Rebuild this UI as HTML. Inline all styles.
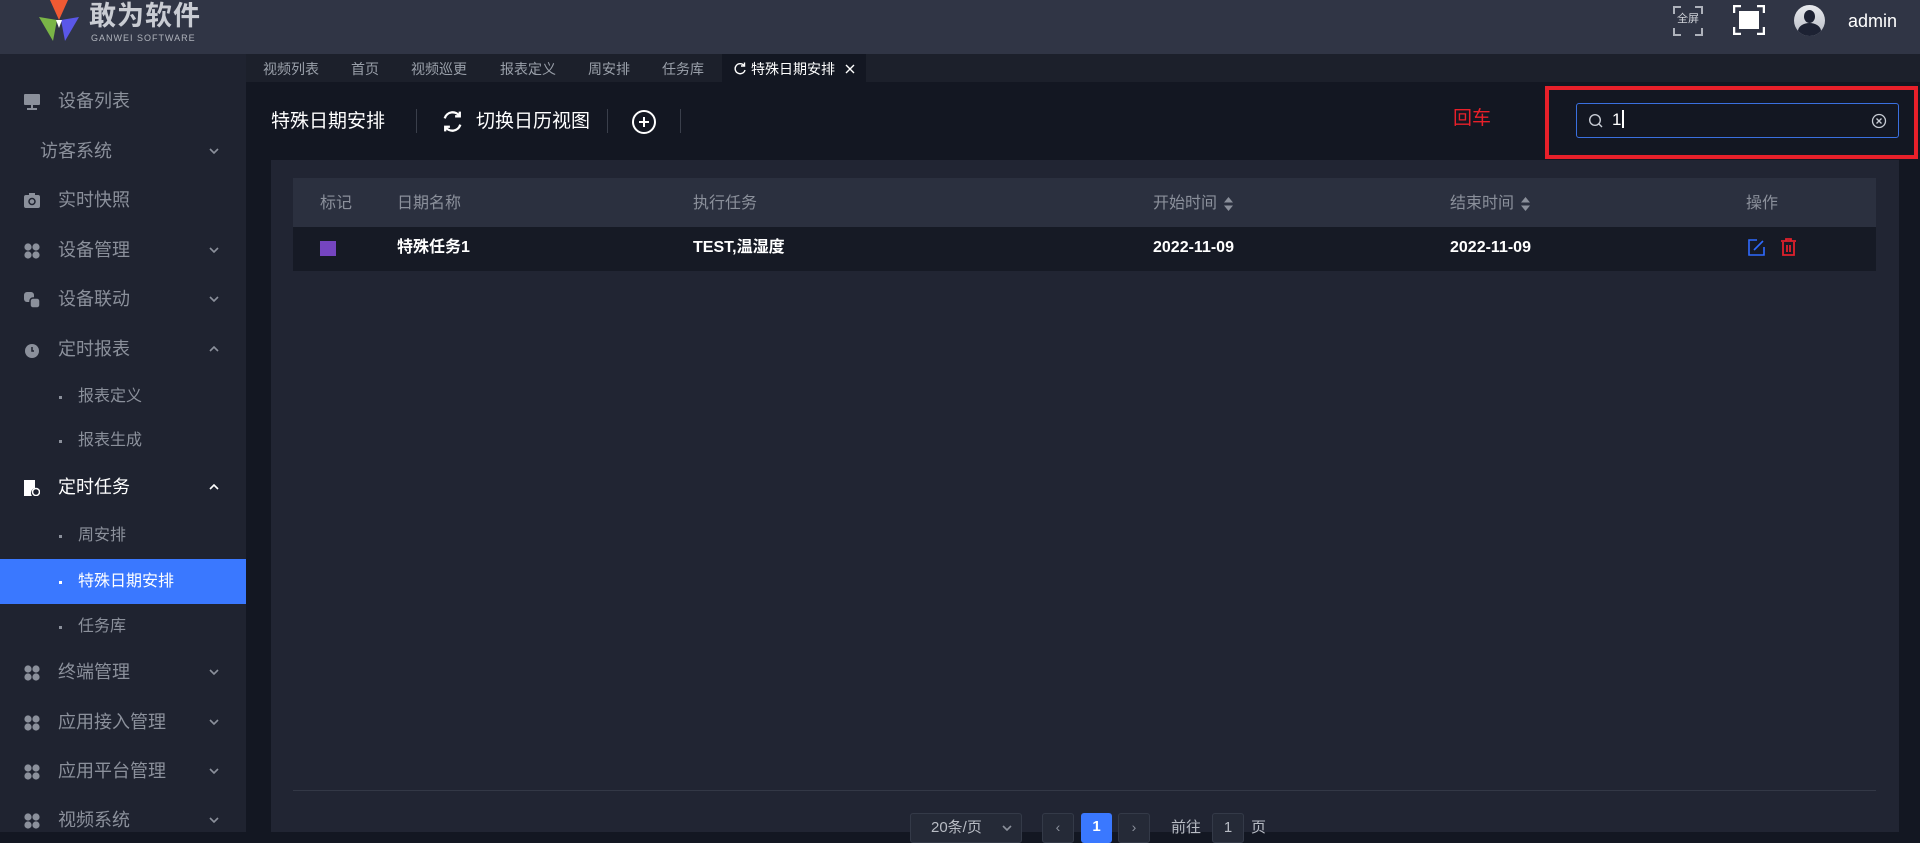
<!DOCTYPE html>
<html><head><meta charset="utf-8">
<style>
*{margin:0;padding:0;box-sizing:border-box}
body{width:1920px;height:832px;overflow:hidden;background:#131722;font-family:"Liberation Sans","Noto Sans CJK SC",sans-serif;position:relative}
.abs{position:absolute}
#hdr{left:0;top:0;width:1920px;height:54px;background:#303545}
#side{left:0;top:54px;width:246px;height:778px;background:#1f2330}
.mi{position:absolute;left:0;width:246px;height:22px;font-size:18px;color:#8b909b;line-height:22px}
.mi .t{position:absolute;left:58px;top:0}
.mi svg.ic{position:absolute;left:24px;top:4px}
.mi svg.ar{position:absolute;left:209px;top:8px}
.sub{position:absolute;left:0;width:246px;height:20px;font-size:16px;color:#8b909b;line-height:20px}
.sub .d{position:absolute;left:59px;top:9px;width:3px;height:3px;background:#8b909b}
.sub .t{position:absolute;left:78px}
#tabs{left:246px;top:54px;width:1674px;height:28px;background:#1c202b}
.tab{position:absolute;top:60px;font-size:14px;color:#9aa0aa;line-height:18px}
#tool{left:246px;top:82px;width:1674px;height:78px;background:#131722}
#panel{left:271px;top:160px;width:1628px;height:672px;background:#212533}
.col{position:absolute;font-size:16px;height:22px;line-height:22px}
</style></head><body>
<div id="hdr" class="abs">
  <svg class="abs" style="left:37px;top:0" width="44" height="42" viewBox="0 0 44 42">
    <polygon points="13,0 31,0 22,20" fill="#f05a33"/>
    <polygon points="2,17 20,20 16,41" fill="#7ab547"/>
    <polygon points="24,20 42,17 28,41" fill="#5a57e8"/>
    <polygon points="19,20 25,20 22,28" fill="#fff"/>
  </svg>
  <div class="abs" style="left:89px;top:0px;font-size:27px;line-height:32px;font-weight:bold;color:#c9ccd3;letter-spacing:1px">敢为软件</div>
  <div class="abs" style="left:91px;top:33px;font-size:9px;line-height:10px;color:#b0b4bc;letter-spacing:1px">GANWEI SOFTWARE</div>
  <svg class="abs" style="left:1673px;top:6px" width="30" height="30" viewBox="0 0 30 30" fill="none" stroke="#aeb2bb" stroke-width="2"><path d="M1 8V1h7M22 1h7v7M29 22v7h-7M8 29H1v-7"/></svg>
  <div class="abs" style="left:1677px;top:12px;font-size:11px;line-height:14px;color:#d0d3d9">全屏</div>
  <svg class="abs" style="left:1733px;top:5px" width="32" height="30" viewBox="0 0 32 30" fill="none" stroke="#fff" stroke-width="2.5"><path d="M1 8V1h7M24 1h7v7M31 22v7h-7M8 29H1v-7"/><rect x="6" y="6" width="20" height="18" fill="#fff" stroke="none"/></svg>
  <div class="abs" style="left:1794px;top:5px;width:31px;height:31px;border-radius:50%;background:linear-gradient(#e8eaee,#b8bcc5);overflow:hidden">
    <div class="abs" style="left:10px;top:5px;width:11px;height:13px;border-radius:50%;background:#1d2233"></div>
    <div class="abs" style="left:4px;top:18px;width:23px;height:16px;border-radius:50% 50% 0 0;background:#1d2233"></div>
  </div>
  <div class="abs" style="left:1848px;top:10px;font-size:18px;line-height:22px;color:#fff">admin</div>
</div>

<svg width="0" height="0" style="position:absolute">
  <defs>
    <symbol id="dn" viewBox="0 0 10 6"><path d="M1 1l4 4 4-4" fill="none" stroke="#8b909b" stroke-width="1.6"/></symbol>
    <symbol id="up" viewBox="0 0 10 6"><path d="M1 5l4-4 4 4" fill="none" stroke="currentColor" stroke-width="1.6"/></symbol>
    <symbol id="four" viewBox="0 0 16 16"><circle cx="4" cy="4" r="3.6" fill="#8b909b"/><circle cx="12" cy="4" r="3.6" fill="#8b909b"/><circle cx="4" cy="12" r="3.6" fill="#8b909b"/><circle cx="12" cy="12" r="3.6" fill="#8b909b"/></symbol>
  </defs>
</svg>

<div id="side" class="abs">
  <div class="mi" style="top:36px"><svg class="ic" width="16" height="16" viewBox="0 0 16 16"><rect x="0" y="0" width="16" height="11" rx="1" fill="#8b909b"/><rect x="7" y="11" width="2" height="3" fill="#8b909b"/><rect x="3" y="14" width="10" height="2" fill="#8b909b"/></svg><div class="t">设备列表</div></div>
  <div class="mi" style="top:86px"><div class="t" style="left:40px">访客系统</div><svg class="ar" width="10" height="6"><use href="#dn"/></svg></div>
  <div class="mi" style="top:135px"><svg class="ic" width="16" height="15" viewBox="0 0 16 15"><rect x="0" y="2" width="16" height="13" rx="2" fill="#8b909b"/><rect x="5" y="0" width="6" height="3" fill="#8b909b"/><circle cx="8" cy="8.5" r="3" fill="none" stroke="#1f2330" stroke-width="1.5"/></svg><div class="t">实时快照</div></div>
  <div class="mi" style="top:185px"><svg class="ic" width="16" height="16"><use href="#four"/></svg><div class="t">设备管理</div><svg class="ar" width="10" height="6"><use href="#dn"/></svg></div>
  <div class="mi" style="top:234px"><svg class="ic" width="16" height="16" viewBox="0 0 16 16"><rect x="0" y="0" width="10" height="10" rx="3" fill="#8b909b"/><rect x="6" y="6" width="10" height="10" rx="3" fill="#8b909b" stroke="#1f2330" stroke-width="1.5"/></svg><div class="t">设备联动</div><svg class="ar" width="10" height="6"><use href="#dn"/></svg></div>
  <div class="mi" style="top:284px"><svg class="ic" width="16" height="16" viewBox="0 0 16 16"><circle cx="8" cy="9" r="7" fill="#8b909b"/><path d="M8 5v4h2" stroke="#1f2330" stroke-width="1.5" fill="none"/></svg><div class="t">定时报表</div><svg class="ar" width="10" height="6" style="color:#8b909b"><use href="#up"/></svg></div>
  <div class="sub" style="top:333px"><div class="d"></div><div class="t">报表定义</div></div>
  <div class="sub" style="top:377px"><div class="d"></div><div class="t">报表生成</div></div>
  <div class="mi" style="top:422px;color:#fff"><svg class="ic" width="16" height="16" viewBox="0 0 16 16"><path d="M0 0h11v8a5 5 0 0 0-3 8H0z" fill="#fff"/><circle cx="12" cy="12" r="3.5" fill="none" stroke="#fff" stroke-width="1.5"/></svg><div class="t">定时任务</div><svg class="ar" width="10" height="6" style="color:#fff"><use href="#up"/></svg></div>
  <div class="sub" style="top:472px"><div class="d"></div><div class="t">周安排</div></div>
  <div class="abs" style="left:0;top:505px;width:246px;height:45px;background:#3a78ff"></div>
  <div class="sub" style="top:518px;color:#fff"><div class="d" style="background:#fff"></div><div class="t">特殊日期安排</div></div>
  <div class="sub" style="top:563px"><div class="d"></div><div class="t">任务库</div></div>
  <div class="mi" style="top:607px"><svg class="ic" width="16" height="16"><use href="#four"/></svg><div class="t">终端管理</div><svg class="ar" width="10" height="6"><use href="#dn"/></svg></div>
  <div class="mi" style="top:657px"><svg class="ic" width="16" height="16"><use href="#four"/></svg><div class="t">应用接入管理</div><svg class="ar" width="10" height="6"><use href="#dn"/></svg></div>
  <div class="mi" style="top:706px"><svg class="ic" width="16" height="16"><use href="#four"/></svg><div class="t">应用平台管理</div><svg class="ar" width="10" height="6"><use href="#dn"/></svg></div>
  <div class="mi" style="top:755px"><svg class="ic" width="16" height="16"><use href="#four"/></svg><div class="t">视频系统</div><svg class="ar" width="10" height="6"><use href="#dn"/></svg></div>
</div>

<div id="tabs" class="abs"></div>
<div class="tab" style="left:263px">视频列表</div>
<div class="tab" style="left:351px">首页</div>
<div class="tab" style="left:411px">视频巡更</div>
<div class="tab" style="left:500px">报表定义</div>
<div class="tab" style="left:588px">周安排</div>
<div class="tab" style="left:662px">任务库</div>
<div class="abs" style="left:722px;top:54px;width:144px;height:28px;background:#131722"></div>
<svg class="abs" style="left:734px;top:62px" width="12" height="13" viewBox="0 0 12 13" fill="none" stroke="#fff" stroke-width="1.4"><path d="M10 3.5A5 5 0 1 0 11 8"/><path d="M10.5 0.5v3.5H7"/></svg>
<div class="tab" style="left:751px;color:#fff">特殊日期安排</div>
<svg class="abs" style="left:845px;top:64px" width="10" height="10" viewBox="0 0 10 10" stroke="#fff" stroke-width="1.4"><path d="M1 1l8 8M9 1l-8 8"/></svg>

<div id="tool" class="abs"></div>
<div class="abs" style="left:271px;top:110px;font-size:19px;line-height:24px;color:#fff">特殊日期安排</div>
<div class="abs" style="left:416px;top:109px;width:1px;height:24px;background:#3a3f4b"></div>
<svg class="abs" style="left:440px;top:109px" width="25" height="25" viewBox="0 0 24 24" fill="none" stroke="#fff" stroke-width="2.2"><path d="M4.5 9A8 8 0 0 1 19 7M19.5 15A8 8 0 0 1 5 17"/><path d="M19 2.5V7h-4.5M5 21.5V17h4.5"/></svg>
<div class="abs" style="left:476px;top:110px;font-size:19px;line-height:24px;color:#fff">切换日历视图</div>
<div class="abs" style="left:607px;top:109px;width:1px;height:24px;background:#3a3f4b"></div>
<svg class="abs" style="left:631px;top:109px" width="26" height="26" viewBox="0 0 26 26" fill="none" stroke="#fff" stroke-width="2"><circle cx="13" cy="13" r="11"/><path d="M13 8v10M8 13h10"/></svg>
<div class="abs" style="left:680px;top:109px;width:1px;height:24px;background:#3a3f4b"></div>
<div class="abs" style="left:1453px;top:107px;font-size:19px;line-height:24px;color:#e8202a">回车</div>
<div class="abs" style="left:1545px;top:86px;width:373px;height:73px;border:4px solid #e8202a"></div>
<div class="abs" style="left:1576px;top:103px;width:323px;height:35px;border:1px solid #3a70e0;border-radius:3px;background:#131722"></div>
<svg class="abs" style="left:1588px;top:113px" width="15" height="15" viewBox="0 0 15 15" fill="none" stroke="#c8ccd4" stroke-width="1.4"><circle cx="7" cy="7" r="5.3"/><path d="M11 11l3 3"/></svg>
<div class="abs" style="left:1612px;top:110px;font-size:17px;line-height:20px;color:#fff">1<span style="display:inline-block;width:1.5px;height:18px;background:#fff;vertical-align:-3px;margin-left:1px"></span></div>
<svg class="abs" style="left:1871px;top:113px" width="16" height="16" viewBox="0 0 16 16" fill="none" stroke="#c8ccd4" stroke-width="1.3"><circle cx="8" cy="8" r="6.5"/><path d="M5.5 5.5l5 5M10.5 5.5l-5 5"/></svg>

<div id="panel" class="abs"></div>
<div class="abs" style="left:293px;top:178px;width:1583px;height:49px;background:#2b303f"></div>
<div class="abs" style="left:293px;top:227px;width:1583px;height:44px;background:#161a25"></div>
<div class="col" style="left:320px;top:193px;color:#8b909b">标记</div>
<div class="col" style="left:397px;top:193px;color:#8b909b">日期名称</div>
<div class="col" style="left:693px;top:193px;color:#8b909b">执行任务</div>
<div class="col" style="left:1153px;top:193px;color:#8b909b">开始时间</div>
<svg class="abs" style="left:1224px;top:197px" width="9" height="14" viewBox="0 0 9 14" fill="#8b909b"><path d="M4.5 0L9 5.5H0zM4.5 14L0 8.5h9z"/></svg>
<div class="col" style="left:1450px;top:193px;color:#8b909b">结束时间</div>
<svg class="abs" style="left:1521px;top:197px" width="9" height="14" viewBox="0 0 9 14" fill="#8b909b"><path d="M4.5 0L9 5.5H0zM4.5 14L0 8.5h9z"/></svg>
<div class="col" style="left:1746px;top:193px;color:#8b909b">操作</div>
<div class="abs" style="left:320px;top:241px;width:16px;height:15px;background:#7545c0"></div>
<div class="col" style="left:397px;top:237px;color:#fff;font-weight:bold">特殊任务1</div>
<div class="col" style="left:693px;top:237px;color:#fff;font-weight:bold">TEST,温湿度</div>
<div class="col" style="left:1153px;top:237px;color:#fff;font-weight:bold">2022-11-09</div>
<div class="col" style="left:1450px;top:237px;color:#fff;font-weight:bold">2022-11-09</div>
<svg class="abs" style="left:1748px;top:239px" width="17" height="17" viewBox="0 0 17 17" fill="none" stroke="#2f6bff" stroke-width="1.6"><path d="M9 1H1v15h15V8"/><path d="M6 11l9-9"/></svg>
<svg class="abs" style="left:1780px;top:238px" width="17" height="18" viewBox="0 0 17 18" fill="none" stroke="#e0202c" stroke-width="1.8"><path d="M1 3h15M6 3V1h5v2M3 4v13h11V4"/><path d="M7 7v7M10 7v7"/></svg>

<div class="abs" style="left:293px;top:790px;width:1583px;height:1px;background:#333846"></div>
<div class="abs" style="left:910px;top:813px;width:112px;height:30px;border:1px solid #343a48;border-radius:3px;background:#252a37"></div>
<div class="abs" style="left:931px;top:818px;font-size:15px;line-height:20px;color:#b8bcc4">20条/页</div>
<svg class="abs" style="left:1002px;top:825px" width="10" height="6"><use href="#dn"/></svg>
<div class="abs" style="left:1042px;top:813px;width:32px;height:30px;border:1px solid #343a48;border-radius:3px;background:#252a37;color:#8b909b;font-size:14px;text-align:center;line-height:26px">‹</div>
<div class="abs" style="left:1081px;top:813px;width:31px;height:30px;border-radius:3px;background:#3a78ff;color:#fff;font-size:15px;font-weight:bold;text-align:center;line-height:28px">1</div>
<div class="abs" style="left:1118px;top:813px;width:32px;height:30px;border:1px solid #343a48;border-radius:3px;background:#252a37;color:#8b909b;font-size:14px;text-align:center;line-height:26px">›</div>
<div class="abs" style="left:1171px;top:818px;font-size:15px;line-height:20px;color:#b8bcc4">前往</div>
<div class="abs" style="left:1212px;top:813px;width:32px;height:30px;border:1px solid #343a48;border-radius:3px;background:#252a37;color:#b8bcc4;font-size:15px;text-align:center;line-height:28px">1</div>
<div class="abs" style="left:1251px;top:818px;font-size:15px;line-height:20px;color:#b8bcc4">页</div>
</body></html>
